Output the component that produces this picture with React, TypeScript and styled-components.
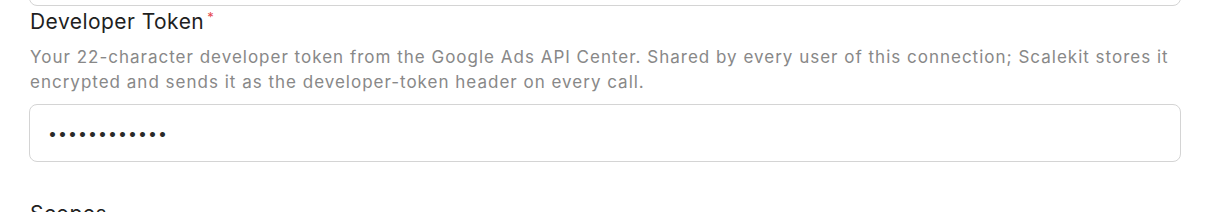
import React from 'react'
import styled, { createGlobalStyle } from 'styled-components'

const GlobalStyle = createGlobalStyle`
  body {
    margin: 0;
    background: #ffffff;
    font-family: Inter, "Noto Sans", sans-serif;
    -webkit-font-smoothing: antialiased;
  }
`

const Form = styled.div`
  width: 1152px;
  margin-left: 29px;
  display: flex;
  flex-direction: column;
  height: 212px;
  overflow: hidden;
`

const PrevInput = styled.div`
  flex: none;
  height: 40px;
  margin-top: -36px;
  border: 1px solid #d4d4d4;
  border-radius: 8px;
`

const Field = styled.div`
  display: flex;
  flex-direction: column;
  padding-top: 2px;
`

const Label = styled.label`
  font-size: 21px;
  line-height: 28px;
  color: #1f1f1f;
  padding-left: 1px;
  letter-spacing: 0.45px;
`

const Required = styled.span`
  color: #e5484d;
  font-size: 13px;
  vertical-align: top;
  position: relative;
  top: -5px;
  margin-left: 3px;
`

const Help = styled.p`
  margin: 9px 0 0 1px;
  font-size: 17px;
  line-height: 25px;
  color: #888888;
  letter-spacing: 1px;
`

const Input = styled.input`
  box-sizing: border-box;
  margin-top: 9px;
  height: 58px;
  width: 100%;
  border: 1px solid #d4d4d4;
  border-radius: 8px;
  padding: 0 18px;
  font-family: Inter, sans-serif;
  font-size: 16px;
  color: #2a2a2a;
  letter-spacing: 1px;
  outline: none;
  background: #fff;
`

const NextLabel = styled(Label)`
  margin-top: 38px;
`

export default function App() {
  return (
    <>
      <GlobalStyle />
      <Form>
        <PrevInput />
        <Field>
          <Label>
            Developer Token<Required>*</Required>
          </Label>
          <Help>
            Your 22-character developer token from the Google Ads API Center. Shared by every user of this connection; Scalekit stores it encrypted and sends it as the developer-token header on every call.
          </Help>
          <Input type="password" readOnly value="abcdefghijkl" />
        </Field>
        <NextLabel>Scopes</NextLabel>
      </Form>
    </>
  )
}
